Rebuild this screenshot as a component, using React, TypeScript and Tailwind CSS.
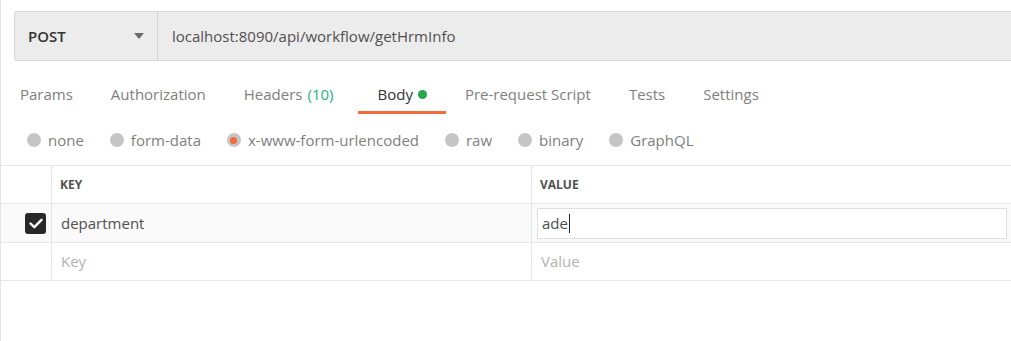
import React from "react";

const tabs = [
  { label: "Params" },
  { label: "Authorization" },
  { label: "Headers", count: "(10)" },
  { label: "Body", active: true, dot: true },
  { label: "Pre-request Script" },
  { label: "Tests" },
  { label: "Settings" },
];

const bodyTypes = ["none", "form-data", "x-www-form-urlencoded", "raw", "binary", "GraphQL"];

function Radio({ checked }: { checked?: boolean }) {
  return (
    <span className="grid h-[14px] w-[14px] shrink-0 place-items-center rounded-full bg-[#c5c5c5]">
      {checked && <span className="h-[7px] w-[7px] rounded-full bg-[#f26b3a]" />}
    </span>
  );
}

export default function App() {
  return (
    <div
      className="h-[341px] w-full overflow-hidden border-l border-[#e4e4e4] bg-white text-[15px]"
      style={{ fontFamily: '"Open Sans", "Noto Sans", sans-serif' }}
    >
      {/* request bar */}
      <div className="ml-[13px] mt-[11px] flex h-[50px] rounded-l-[3px] border border-r-0 border-[#d5d5d5] bg-[#ececec]">
        <div className="flex w-[143px] shrink-0 items-center justify-between border-r border-[#d5d5d5] pl-[13px] pr-[13px]">
          <span className="font-semibold text-[#333]">POST</span>
          <svg width="10" height="6" viewBox="0 0 10 6">
            <path d="M0 0h10L5 6z" fill="#6b6b6b" />
          </svg>
        </div>
        <div className="flex items-center pl-[14px] text-[#505050]">localhost:8090/api/workflow/getHrmInfo</div>
      </div>

      {/* tabs */}
      <div className="mt-[14px] flex h-[39px]">
        {tabs.map((t) => (
          <div
            key={t.label}
            className={`flex items-center gap-[5px] border-b-[3px] px-[19px] pt-[2px] ${
              t.active ? "border-[#f26b3a] text-[#333]" : "border-transparent text-[#808080]"
            }`}
          >
            <span>{t.label}</span>
            {t.count && <span className="mr-[6px] text-[#26b47f]">{t.count}</span>}
            {t.dot && <span className="h-[9px] w-[9px] rounded-full bg-[#27a54b]" />}
          </div>
        ))}
      </div>

      {/* body types */}
      <div className="flex h-[51px] items-center gap-[26px] pl-[26px] pt-[1px] text-[#808080]">
        {bodyTypes.map((b) => (
          <label key={b} className="flex items-center gap-[7px]">
            <Radio checked={b === "x-www-form-urlencoded"} />
            <span>{b}</span>
          </label>
        ))}
      </div>

      {/* table */}
      <div className="border-t border-[#e6e6e6]">
        <div className="grid h-[38px] grid-cols-[51px_480px_1fr] border-b border-[#e6e6e6]">
          <div className="border-r border-[#e6e6e6]" />
          <div className="flex items-center border-r border-[#e6e6e6] pl-[8px] text-[12px] font-bold text-[#505050]">KEY</div>
          <div className="flex items-center pl-[8px] text-[12px] font-bold text-[#505050]">VALUE</div>
        </div>
        <div className="grid h-[39px] grid-cols-[51px_480px_1fr] border-b border-[#e6e6e6] bg-[#fafafa]">
          <div className="flex items-center justify-end border-r border-[#e6e6e6] pr-[5px]">
            <span className="grid h-[21px] w-[21px] place-items-center rounded-[3px] bg-[#282828]">
              <svg width="14" height="11" viewBox="0 0 14 11">
                <path d="M1.5 5.5l3.8 3.6L12.5 1.8" fill="none" stroke="#fff" strokeWidth="2.4" strokeLinecap="round" strokeLinejoin="round" />
              </svg>
            </span>
          </div>
          <div className="flex items-center border-r border-[#e6e6e6] pl-[9px] text-[#505050]">department</div>
          <div className="flex items-center pl-[5px] pr-[4px]">
            <div className="flex h-[31px] w-full items-center border border-[#e0e0e0] bg-white pl-[4px] text-[#505050]">
              ade<span className="ml-[1px] h-[19px] w-[1px] bg-[#222]" />
            </div>
          </div>
        </div>
        <div className="grid h-[38px] grid-cols-[51px_480px_1fr] border-b border-[#e6e6e6]">
          <div className="border-r border-[#e6e6e6]" />
          <div className="flex items-center border-r border-[#e6e6e6] pl-[9px] text-[#b3b3b3]">Key</div>
          <div className="flex items-center pl-[9px] text-[#b3b3b3]">Value</div>
        </div>
      </div>
    </div>
  );
}
